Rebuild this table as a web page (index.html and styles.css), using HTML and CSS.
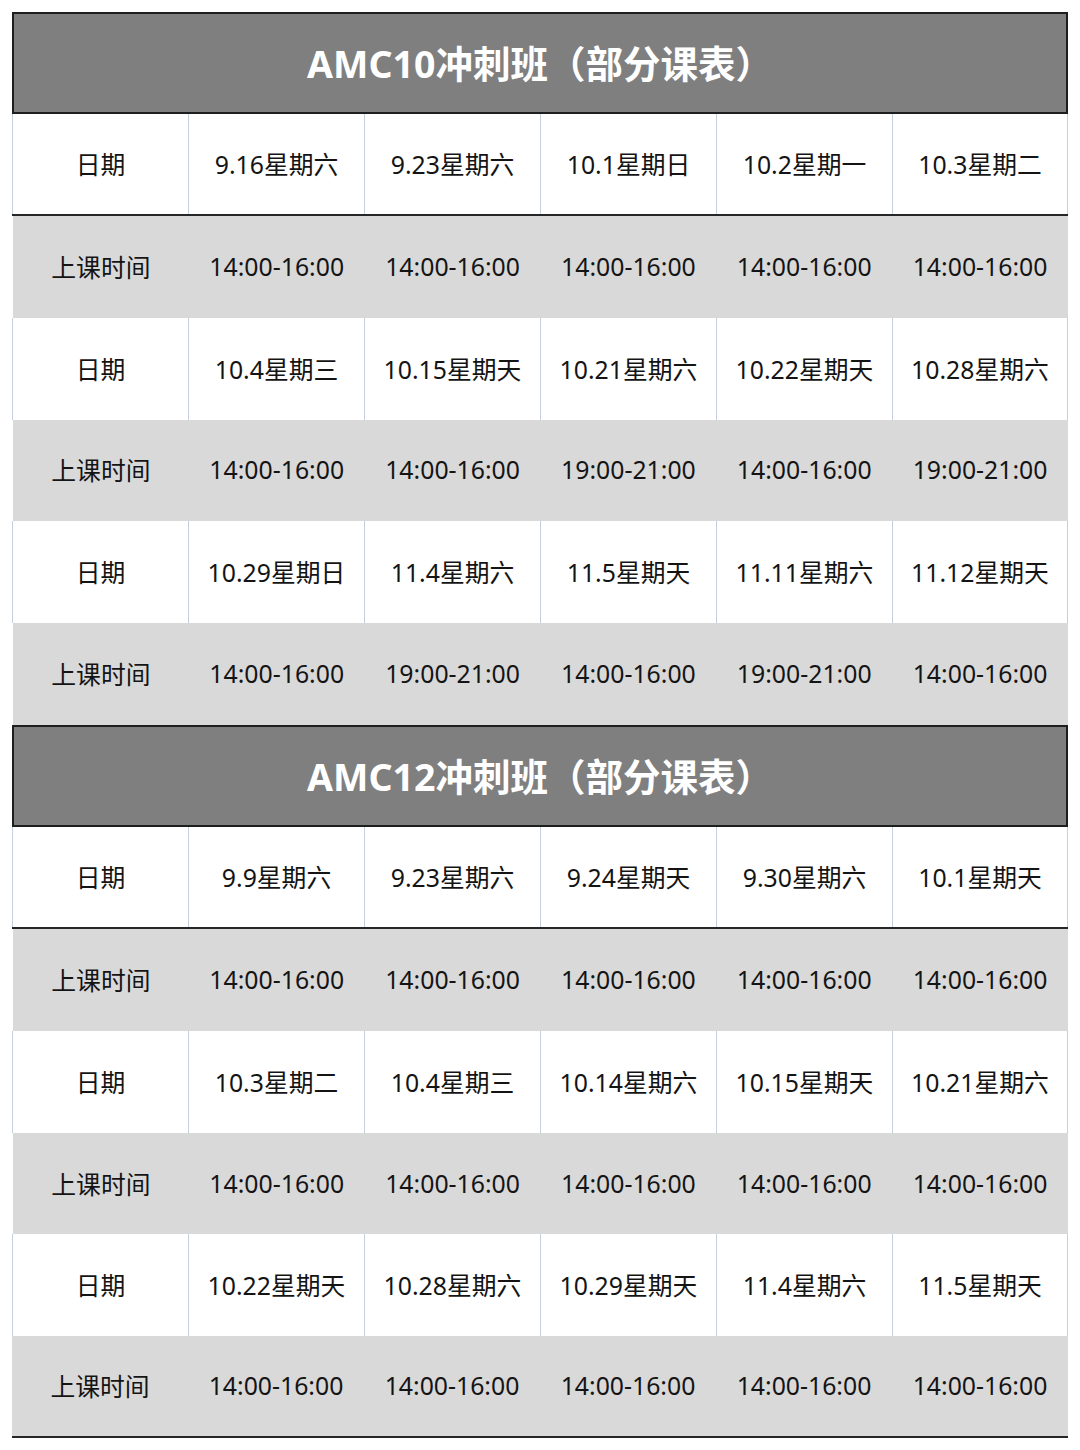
FILE: index.html
```html
<!DOCTYPE html>
<html lang="zh-CN">
<head>
<meta charset="utf-8">
<title>AMC冲刺班课表</title>
<link rel="stylesheet" href="styles.css">
</head>
<body>
<div class="sheet">
  <div class="title">AMC10冲刺班（部分课表）</div>
  <div class="row w sep"><div class="c">日期</div><div class="c">9.16星期六</div><div class="c">9.23星期六</div><div class="c">10.1星期日</div><div class="c">10.2星期一</div><div class="c">10.3星期二</div></div>
  <div class="row g"><div class="c">上课时间</div><div class="c">14:00-16:00</div><div class="c">14:00-16:00</div><div class="c">14:00-16:00</div><div class="c">14:00-16:00</div><div class="c">14:00-16:00</div></div>
  <div class="row w"><div class="c">日期</div><div class="c">10.4星期三</div><div class="c">10.15星期天</div><div class="c">10.21星期六</div><div class="c">10.22星期天</div><div class="c">10.28星期六</div></div>
  <div class="row g"><div class="c">上课时间</div><div class="c">14:00-16:00</div><div class="c">14:00-16:00</div><div class="c">19:00-21:00</div><div class="c">14:00-16:00</div><div class="c">19:00-21:00</div></div>
  <div class="row w"><div class="c">日期</div><div class="c">10.29星期日</div><div class="c">11.4星期六</div><div class="c">11.5星期天</div><div class="c">11.11星期六</div><div class="c">11.12星期天</div></div>
  <div class="row g"><div class="c">上课时间</div><div class="c">14:00-16:00</div><div class="c">19:00-21:00</div><div class="c">14:00-16:00</div><div class="c">19:00-21:00</div><div class="c">14:00-16:00</div></div>

  <div class="title">AMC12冲刺班（部分课表）</div>
  <div class="row w sep"><div class="c">日期</div><div class="c">9.9星期六</div><div class="c">9.23星期六</div><div class="c">9.24星期天</div><div class="c">9.30星期六</div><div class="c">10.1星期天</div></div>
  <div class="row g"><div class="c">上课时间</div><div class="c">14:00-16:00</div><div class="c">14:00-16:00</div><div class="c">14:00-16:00</div><div class="c">14:00-16:00</div><div class="c">14:00-16:00</div></div>
  <div class="row w"><div class="c">日期</div><div class="c">10.3星期二</div><div class="c">10.4星期三</div><div class="c">10.14星期六</div><div class="c">10.15星期天</div><div class="c">10.21星期六</div></div>
  <div class="row g"><div class="c">上课时间</div><div class="c">14:00-16:00</div><div class="c">14:00-16:00</div><div class="c">14:00-16:00</div><div class="c">14:00-16:00</div><div class="c">14:00-16:00</div></div>
  <div class="row w"><div class="c">日期</div><div class="c">10.22星期天</div><div class="c">10.28星期六</div><div class="c">10.29星期天</div><div class="c">11.4星期六</div><div class="c">11.5星期天</div></div>
  <div class="row g last"><div class="c">上课时间</div><div class="c">14:00-16:00</div><div class="c">14:00-16:00</div><div class="c">14:00-16:00</div><div class="c">14:00-16:00</div><div class="c">14:00-16:00</div></div>
</div>
</body>
</html>
```
FILE: styles.css
```css
html, body {
  margin: 0;
  padding: 0;
  background: #ffffff;
}

body {
  font-family: "Noto Sans", "Noto Sans CJK SC", sans-serif;
  color: #141414;
}

.sheet {
  width: 1056px;
  margin: 12px 12px 0 12px;
  display: flex;
  flex-direction: column;
}

.title {
  box-sizing: border-box;
  height: 102px;
  background: #7f7f7f;
  border: 2px solid #1e1e1e;
  color: #ffffff;
  font-weight: 700;
  font-size: 37.5px;
  display: flex;
  align-items: center;
  justify-content: center;
  padding-bottom: 4px;
}

.row {
  box-sizing: border-box;
  height: 101.85px;
  display: grid;
  grid-template-columns: repeat(6, 1fr);
}

.c {
  display: flex;
  align-items: center;
  justify-content: center;
  font-size: 24.8px;
  white-space: nowrap;
  padding-bottom: 2px;
}

.row.w {
  background: #ffffff;
}

.row.w .c {
  border-left: 1px solid #c7cfdf;
}

.row.w .c:last-child {
  border-right: 1px solid #c7cfdf;
}

.row.g {
  background: #d9d9d9;
  margin-left: 1px;
}

.row.sep {
  border-bottom: 2px solid #262626;
}

.row.last {
  border-bottom: 2px solid #262626;
  margin-left: 0;
}
```
